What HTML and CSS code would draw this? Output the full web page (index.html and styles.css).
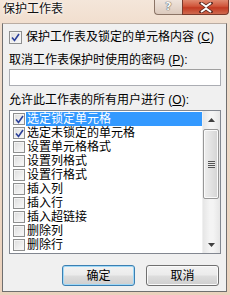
FILE: index.html
```html
<!DOCTYPE html>
<html lang="zh">
<head>
<meta charset="utf-8">
<link rel="stylesheet" href="styles.css">
</head>
<body>
<div class="window">
  <div class="titlebar">
    <span class="title">保护工作表</span>
    <div class="caption">
      <span class="cap-help">?</span>
      <span class="cap-close"><svg width="14" height="11" viewBox="0 0 14 11"><path d="M2 1 L7 4.5 L12 1 M2 10 L7 6.5 L12 10" fill="none" stroke="#5a2a22" stroke-width="3.4" stroke-linecap="square"/><path d="M2 1 L7 4.5 L12 1 M2 10 L7 6.5 L12 10" fill="none" stroke="#ffffff" stroke-width="2"/></svg></span>
    </div>
  </div>
  <div class="client">
    <div class="row-check">
      <span class="cb"><svg width="9" height="9" viewBox="0 0 9 9"><path d="M1 4.5 L3.5 7.5 L8 1" fill="none" stroke="#2a3f9a" stroke-width="1.6"/></svg></span>
      <span>保护工作表及锁定的单元格内容 (<u>C</u>)</span>
    </div>
    <div class="label label-pw">取消工作表保护时使用的密码 (<u>P</u>):</div>
    <div class="input"></div>
    <div class="label label-allow">允许此工作表的所有用户进行 (<u>O</u>):</div>
    <div class="listbox">
      <div class="items">
        <div class="item"><span class="cb small"><svg width="9" height="9" viewBox="0 0 9 9"><path d="M1 4.5 L3.5 7.5 L8 1" fill="none" stroke="#2a3f9a" stroke-width="1.6"/></svg></span><span class="txt sel">选定锁定单元格</span></div>
        <div class="item"><span class="cb small"><svg width="9" height="9" viewBox="0 0 9 9"><path d="M1 4.5 L3.5 7.5 L8 1" fill="none" stroke="#2a3f9a" stroke-width="1.6"/></svg></span><span class="txt">选定未锁定的单元格</span></div>
        <div class="item"><span class="cb small"></span><span class="txt">设置单元格格式</span></div>
        <div class="item"><span class="cb small"></span><span class="txt">设置列格式</span></div>
        <div class="item"><span class="cb small"></span><span class="txt">设置行格式</span></div>
        <div class="item"><span class="cb small"></span><span class="txt">插入列</span></div>
        <div class="item"><span class="cb small"></span><span class="txt">插入行</span></div>
        <div class="item"><span class="cb small"></span><span class="txt">插入超链接</span></div>
        <div class="item"><span class="cb small"></span><span class="txt">删除列</span></div>
        <div class="item"><span class="cb small"></span><span class="txt">删除行</span></div>
      </div>
      <div class="scrollbar">
        <div class="arrow"><svg width="7" height="4" viewBox="0 0 7 4"><path d="M0 4 L3.5 0 L7 4 Z" fill="#404040"/></svg></div>
        <div class="track">
          <div class="thumb"><span class="grip"></span></div>
        </div>
        <div class="arrow"><svg width="7" height="4" viewBox="0 0 7 4"><path d="M0 0 L3.5 4 L7 0 Z" fill="#404040"/></svg></div>
      </div>
    </div>
    <div class="buttons">
      <button class="btn default">确定</button>
      <button class="btn">取消</button>
    </div>
  </div>
</div>
</body>
</html>
```

FILE: styles.css
```css
* { box-sizing: border-box; }
html, body { margin: 0; padding: 0; }
body {
  width: 230px;
  height: 295px;
  overflow: hidden;
  font-family: "Liberation Sans", "Noto Sans CJK SC", sans-serif;
  font-size: 12px;
  color: #000;
  background: #ecd3bf;
}
.window {
  width: 230px;
  height: 295px;
  display: flex;
  flex-direction: column;
  background: linear-gradient(to bottom, #f4e6da 0px, #f0dccb 30px, #ebd2bd 295px);
}
.titlebar {
  height: 23px;
  display: flex;
  align-items: flex-start;
  padding-left: 3px;
}
.title {
  font-size: 12px;
  line-height: 16px;
  padding-top: 1px;
  color: #111;
  text-shadow: 0 0 4px #fff, 0 0 3px #fff;
}
.caption {
  margin-left: auto;
  margin-right: 1px;
  display: flex;
  height: 15px;
}
.cap-help {
  width: 28px;
  height: 15px;
  border: 1px solid #8b7466;
  border-top: none;
  border-right: none;
  border-radius: 0 0 0 4px;
  background: linear-gradient(to bottom, #efe4dc, #dccabd);
  color: #f8f8f8;
  font-family: "DejaVu Sans", sans-serif;
  font-weight: bold;
  font-size: 11px;
  line-height: 14px;
  text-align: center;
  text-shadow: 0 0 1px #444, 0 0 1px #444;
}
.cap-close {
  width: 47px;
  height: 15px;
  border: 1px solid #7a3a2c;
  border-top: none;
  border-radius: 0 0 4px 0;
  background: linear-gradient(to bottom, #e08a70 0%, #d0553a 45%, #c23a22 55%, #cf6a4f 100%);
  display: flex;
  align-items: center;
  justify-content: center;
}
.client {
  flex: 1;
  margin: 0 3px 3px 2px;
  background: #f0f0f0;
  border: 1px solid #6f6f6f;
  border-top-color: #b9aca2;
  padding: 0 5px 0 6px;
  display: flex;
  flex-direction: column;
}
.row-check {
  margin-top: 6px;
  height: 14px;
  display: flex;
  align-items: center;
  gap: 4px;
  line-height: 14px;
}
.cb {
  width: 13px;
  height: 13px;
  flex: none;
  border: 1px solid #8e8f8f;
  background: linear-gradient(135deg, #dcdcdc, #fbfbfb);
  box-shadow: inset 0 0 0 1px #f4f4f4;
  display: flex;
  align-items: center;
  justify-content: center;
}
.cb.small {
  width: 12px;
  height: 12px;
}
.label {
  line-height: 14px;
  height: 14px;
  white-space: nowrap;
}
.label-pw { margin-top: 9px; }
.input {
  margin-top: 2px;
  height: 17px;
  flex: none;
  background: #fff;
  border: 1px solid #abadb3;
  border-top-color: #a0a0a0;
}
.label-allow { margin-top: 7px; }
.listbox {
  margin-top: 3px;
  height: 144px;
  flex: none;
  background: #fff;
  border: 1px solid #828790;
  display: flex;
}
.items {
  flex: 1;
  padding-top: 1px;
  display: flex;
  flex-direction: column;
}
.item {
  height: 14px;
  flex: none;
  display: flex;
  align-items: center;
  padding-left: 3px;
  gap: 1px;
}
.txt {
  flex: 1;
  height: 14px;
  line-height: 14px;
  padding-left: 1px;
  white-space: nowrap;
}
.txt.sel {
  background: #3399ff;
  color: #fff;
}
.scrollbar {
  width: 18px;
  flex: none;
  display: flex;
  flex-direction: column;
  background: linear-gradient(to right, #e6e6e6, #f4f4f4 40%, #f4f4f4 60%, #e6e6e6);
  border-left: 1px solid #f0f0f0;
  padding-right: 1px;
}
.arrow {
  height: 17px;
  flex: none;
  display: flex;
  align-items: center;
  justify-content: center;
}
.track {
  flex: 1;
  padding-top: 1px;
}
.thumb {
  height: 70px;
  border: 1px solid #979797;
  border-radius: 2px;
  background: linear-gradient(to right, #eeeeee, #e2e2e2 50%, #d4d4d4);
  box-shadow: inset 0 0 0 1px #fafafa;
  display: flex;
  align-items: center;
  justify-content: center;
}
.grip {
  width: 7px;
  height: 7px;
  background: repeating-linear-gradient(to bottom, #555 0, #555 1px, #e8e8e8 1px, #e8e8e8 2px);
}
.buttons {
  margin-top: 11px;
  display: flex;
  justify-content: flex-end;
  gap: 11px;
  padding-right: 2px;
}
.btn {
  width: 73px;
  height: 21px;
  font-family: "Liberation Sans", "Noto Sans CJK SC", sans-serif;
  font-size: 12px;
  line-height: 14px;
  color: #000;
  padding: 0;
  border: 1px solid #707070;
  border-radius: 3px;
  background: linear-gradient(to bottom, #f2f2f2 0%, #ebebeb 48%, #dddddd 52%, #cfcfcf 100%);
  box-shadow: inset 0 0 0 1px #fafafa;
}
.btn.default {
  border-color: #3c7fb1;
  box-shadow: inset 0 0 0 1px #9fd9f8;
}
```
